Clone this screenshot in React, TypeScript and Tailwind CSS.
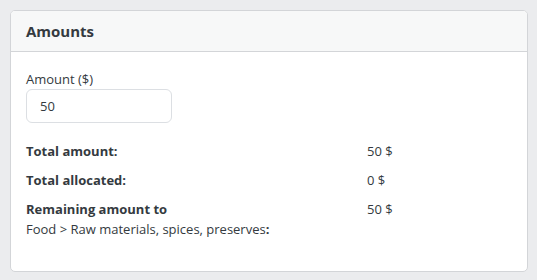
export default function App() {
  const rows = [
    { label: 'Total amount:', value: '50 $' },
    { label: 'Total allocated:', value: '0 $' },
  ];

  return (
    <div
      className="min-h-[280px] bg-[#ebecee] py-[10px] pl-[10px] pr-[9px] text-[#343a40]"
      style={{ fontFamily: '"Open Sans", "Noto Sans", sans-serif' }}
    >
      <div className="overflow-hidden rounded-[5px] border border-[#d3d5d8] bg-white">
        {/* header */}
        <div className="flex h-[41px] items-center border-b border-[#d3d5d8] bg-[#f7f8f8] px-[15px]">
          <h2 className="text-[15px] font-bold">Amounts</h2>
        </div>

        {/* body */}
        <div className="px-[15px] pb-[32px] pt-[17px] text-[13px] leading-[20px]">
          <label className="block">Amount ($)</label>
          <div className="flex h-[34px] w-[146px] items-center rounded-[6px] border border-[#dcdfe3] px-[13px]">
            50
          </div>

          <div className="mt-[18px] flex flex-col gap-[9px]">
            {rows.map((r) => (
              <div key={r.label} className="flex">
                <div className="w-[341px] font-bold">{r.label}</div>
                <div>{r.value}</div>
              </div>
            ))}
            <div className="flex">
              <div className="w-[341px]">
                <div className="font-bold">Remaining amount to</div>
                <div>
                  Food &gt; Raw materials, spices, preserves<span className="font-bold">:</span>
                </div>
              </div>
              <div>50 $</div>
            </div>
          </div>
        </div>
      </div>
    </div>
  );
}
